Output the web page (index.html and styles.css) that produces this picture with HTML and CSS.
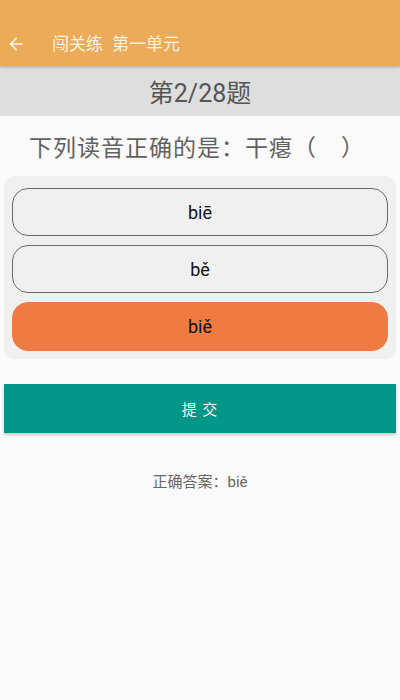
FILE: index.html
```html
<!DOCTYPE html>
<html lang="zh">
<head>
<meta charset="utf-8">
<link rel="stylesheet" href="styles.css">
</head>
<body>
<div class="app">
  <header class="header">
    <div class="toolbar">
      <svg class="back" viewBox="0 0 24 24" width="20" height="20"><path d="M20 11H7.83l5.59-5.59L12 4l-8 8 8 8 1.41-1.41L7.83 13H20v-2z" fill="#fff6e6"/></svg>
      <div class="title"><span>闯关练</span><span>第一单元</span></div>
    </div>
  </header>
  <div class="counter">第2/28题</div>
  <div class="question">下列读音正确的是：干瘪（　）</div>
  <div class="options">
    <div class="option">biē</div>
    <div class="option">bě</div>
    <div class="option selected">biě</div>
  </div>
  <div class="submit">提 交</div>
  <div class="answer">正确答案：biě</div>
</div>
</body>
</html>
```
FILE: styles.css
```css
html, body {
  margin: 0;
  padding: 0;
  background: #fafafa;
}
body {
  font-family: Roboto, "Noto Sans CJK SC", sans-serif;
  width: 400px;
  height: 700px;
  overflow: hidden;
}
.app {
  display: flex;
  flex-direction: column;
}
.header {
  background: #ebab59;
  height: 66px;
  padding-top: 22px;
  box-sizing: border-box;
  box-shadow: 0 1px 3px rgba(0,0,0,0.25);
  position: relative;
  z-index: 1;
}
.toolbar {
  height: 44px;
  display: flex;
  align-items: center;
}
.back {
  margin-left: 6px;
  display: block;
}
.title {
  margin-left: 26px;
  display: flex;
  gap: 9px;
  color: #fff3e0;
  font-size: 17px;
  line-height: 20px;
}
.counter {
  background: #dedede;
  height: 50px;
  display: flex;
  align-items: center;
  justify-content: center;
  font-size: 25px;
  color: #555;
}
.question {
  height: 60px;
  display: flex;
  align-items: center;
  padding-left: 29px;
  font-size: 23px;
  letter-spacing: 1px;
  color: #616161;
}
.options {
  margin: 0 4px;
  background: #f0f0f0;
  border-radius: 10px;
  padding: 12px 8px 8px;
  display: flex;
  flex-direction: column;
  gap: 9px;
}
.option {
  height: 48px;
  box-sizing: border-box;
  border: 1.5px solid #6a6a6a;
  border-radius: 16px;
  display: flex;
  align-items: center;
  justify-content: center;
  font-size: 18px;
  color: #111;
}
.option.selected {
  background: #ef7b43;
  border-color: #ef7b43;
  height: 49px;
}
.submit {
  margin: 25px 4px 0;
  height: 49px;
  background: #009688;
  color: #fff;
  font-size: 15px;
  letter-spacing: 1px;
  display: flex;
  align-items: center;
  justify-content: center;
  box-shadow: 0 2px 3px rgba(0,0,0,0.2);
}
.answer {
  margin-top: 38px;
  text-align: center;
  font-size: 15px;
  line-height: 22px;
  color: #666;
}
```
